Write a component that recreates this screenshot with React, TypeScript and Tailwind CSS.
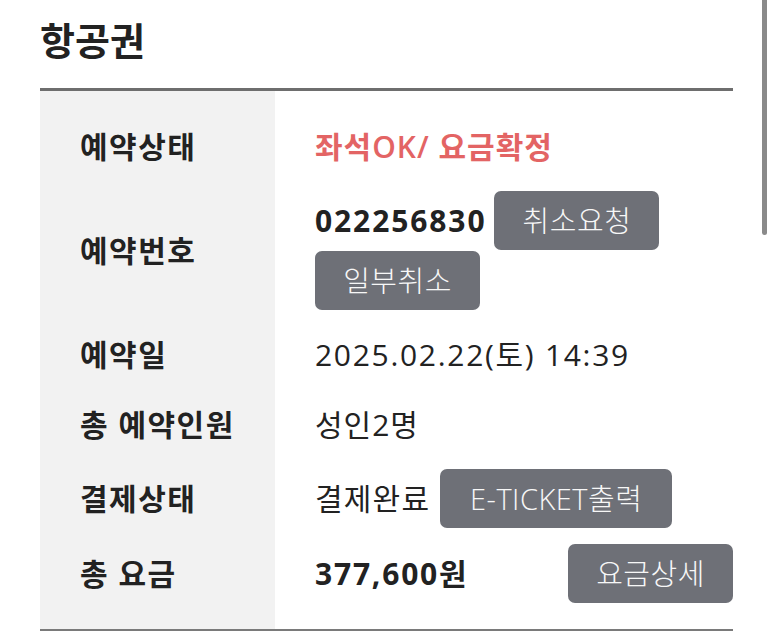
import type { ReactNode } from 'react';

function Row({ label, pad, children }: { label: string; pad: string; children: ReactNode }) {
    return (
        <div className="flex">
            <div className={`w-[235px] shrink-0 bg-[#f2f2f2] pl-[40px] flex items-center text-[30px] leading-[40px] font-bold tracking-[1.5px] ${pad}`}>
                {label}
            </div>
            <div className={`flex-1 pl-[40px] flex items-center ${pad}`}>{children}</div>
        </div>
    );
}

function GrayButton({ children, width }: { children: ReactNode; width: string }) {
    return (
        <button className={`${width} h-[59px] rounded-[7px] bg-[#6e7077] text-[#f7f7f7] text-[29px] font-light tracking-[0.5px]`}>
            {children}
        </button>
    );
}

export default function App() {
    const font = { fontFamily: '"Open Sans", "Noto Sans CJK KR", sans-serif' };

    return (
        <div className="w-[773px] h-[641px] bg-white relative overflow-hidden text-[#222]" style={font}>
            {/* Scrollbar thumb */}
            <div className="absolute right-[6px] top-0 w-[5px] h-[235px] rounded-b-full bg-[#8a8a8a]" />

            <div className="px-[40px]">
                <h1 className="pt-[14px] h-[88px] text-[38px] font-bold leading-[52px]">항공권</h1>

                <div className="border-t-[3px] border-b-2 border-t-[#6e6e6e] border-b-[#7a7a7a]">
                    <Row label="예약상태" pad="pt-[36px] pb-[12px]">
                        <span className="text-[30px] leading-[40px] font-semibold text-[#e36464] tracking-[1px]">좌석OK/ 요금확정</span>
                    </Row>

                    <Row label="예약번호" pad="pt-[12px] pb-[12px]">
                        <div className="flex flex-wrap items-center gap-x-[8px] gap-y-px">
                            <span className="text-[30px] leading-[40px] font-bold tracking-[1.9px]">022256830</span>
                            <GrayButton width="w-[165px]">취소요청</GrayButton>
                            <GrayButton width="w-[165px]">일부취소</GrayButton>
                        </div>
                    </Row>

                    <Row label="예약일" pad="pt-[13px] pb-[15px]">
                        <span className="text-[30px] leading-[40px] tracking-[1.7px]">2025.02.22(토) 14:39</span>
                    </Row>

                    <Row label="총 예약인원" pad="pt-[15px] pb-[12px]">
                        <span className="text-[30px] leading-[40px] tracking-[1px]">성인2명</span>
                    </Row>

                    <Row label="결제상태" pad="pt-[12px] pb-[8px]">
                        <div className="flex items-center gap-[10px]">
                            <span className="text-[30px] leading-[40px] tracking-[1.2px]">결제완료</span>
                            <GrayButton width="w-[232px]">E-TICKET출력</GrayButton>
                        </div>
                    </Row>

                    <Row label="총 요금" pad="pt-[8px] pb-[26px]">
                        <div className="flex-1 flex items-center justify-between">
                            <span className="text-[30px] leading-[40px] font-bold tracking-[1.8px]">377,600원</span>
                            <GrayButton width="w-[165px]">요금상세</GrayButton>
                        </div>
                    </Row>
                </div>
            </div>
        </div>
    );
}
